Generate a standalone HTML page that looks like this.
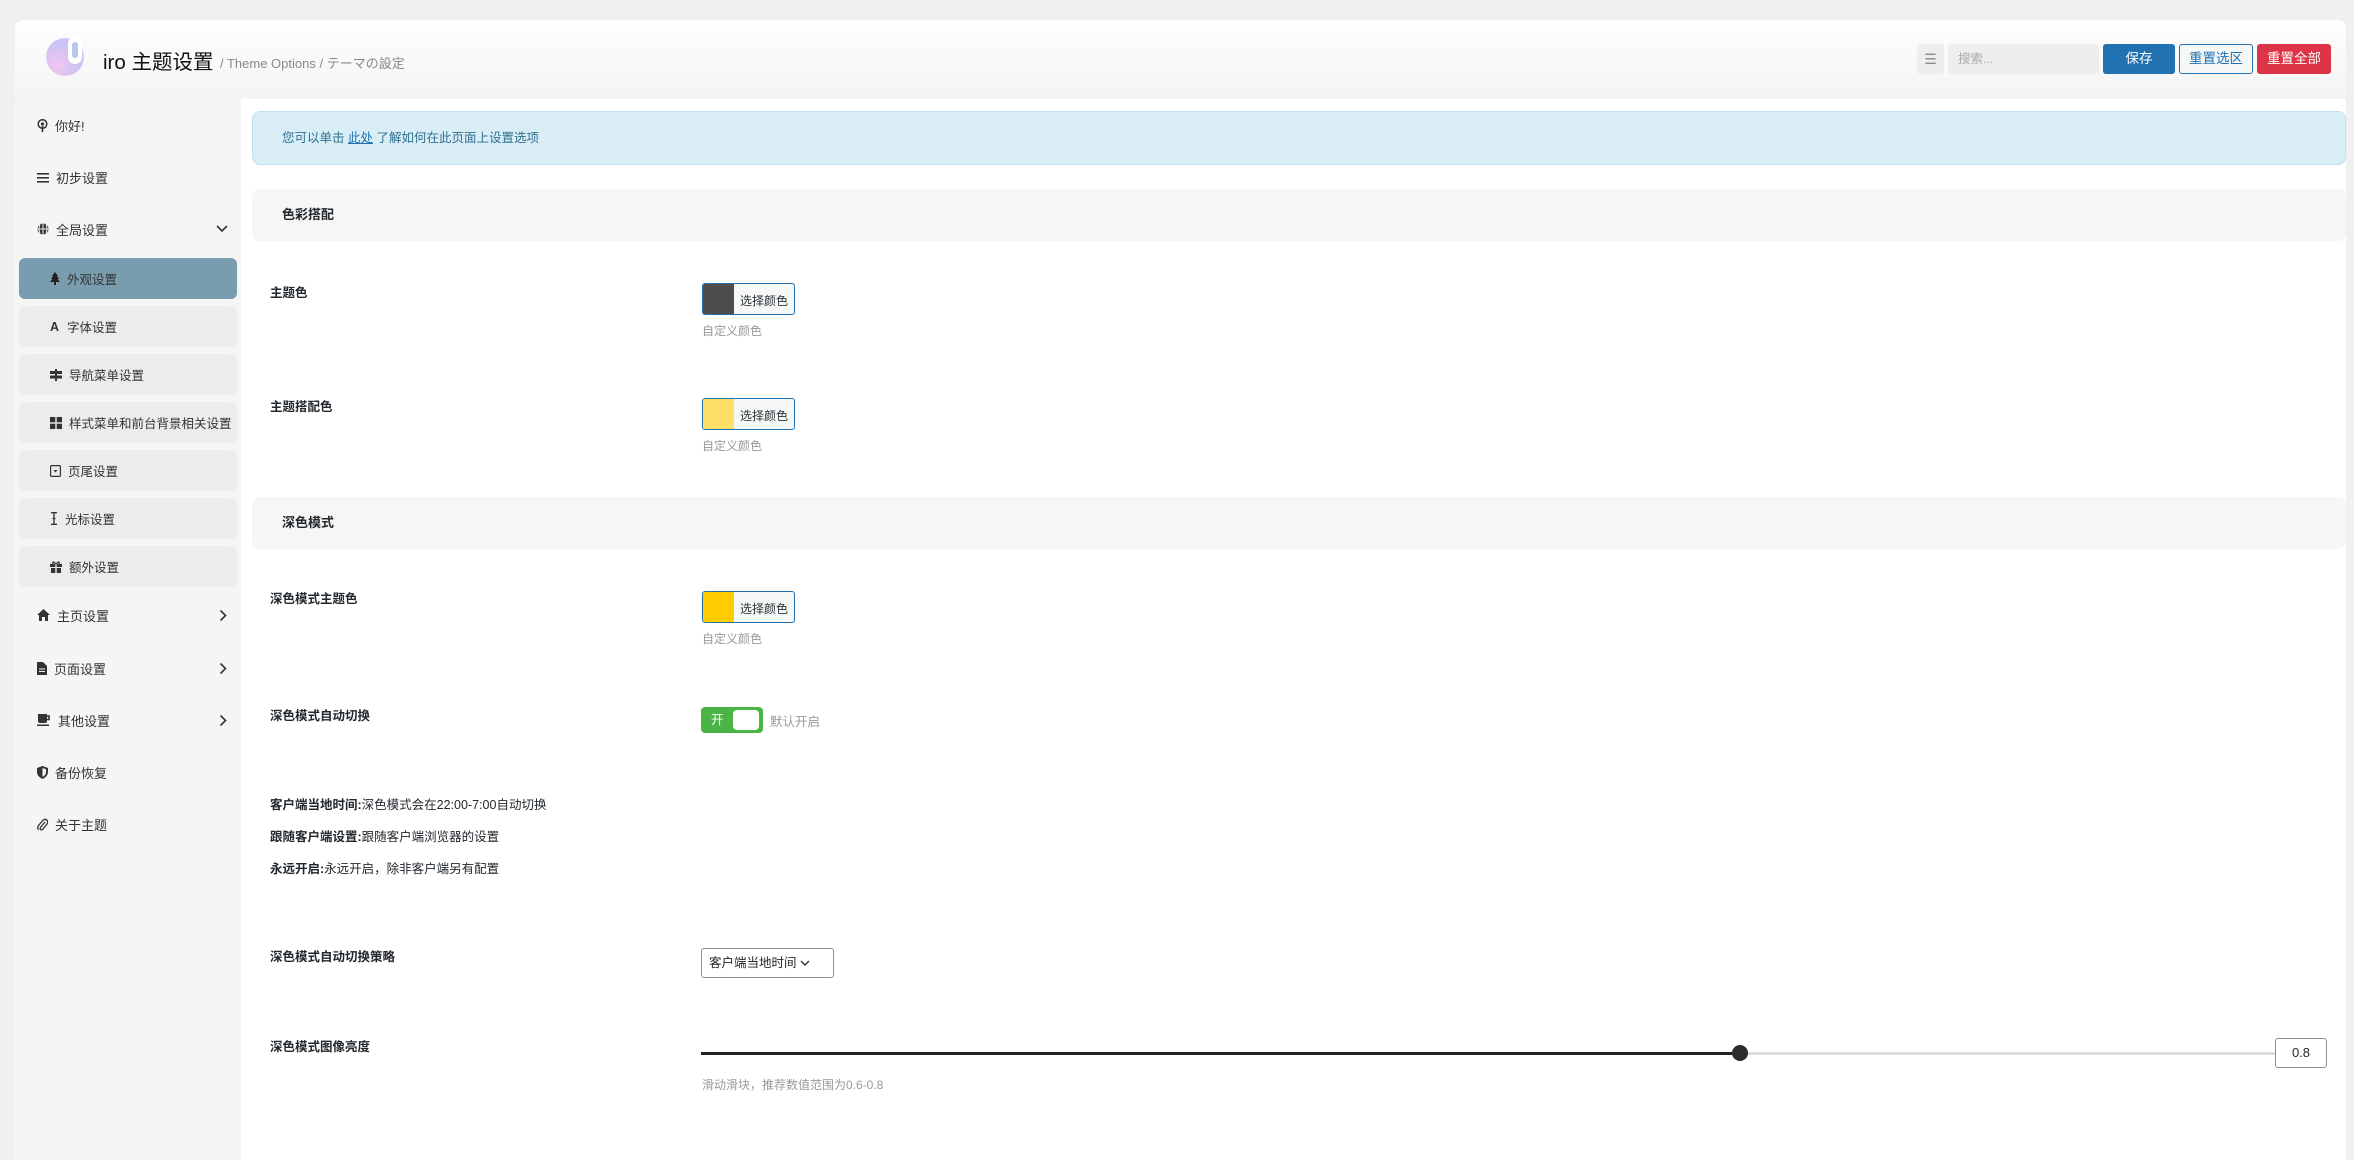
<!DOCTYPE html>
<html><head><meta charset="utf-8"><style>
*{box-sizing:border-box;margin:0;padding:0}
body{width:2354px;height:1147px;background:#f0f0f0;font-family:"Liberation Sans","Noto Sans CJK SC",sans-serif;font-size:13px;color:#23282d;position:relative;overflow:hidden}
.abs{position:absolute}
.card{position:absolute;left:15px;top:20px;width:2331px;height:1140px;background:#fff;border-radius:8px 8px 0 0;overflow:hidden}
.hdr{position:absolute;left:0;top:0;width:100%;height:79px;background:linear-gradient(#fefefe,#f4f4f4)}
.side{position:absolute;left:0;top:79px;width:226px;height:1100px;background:#f5f5f5}
.si{position:absolute;left:22px;font-size:13px;color:#333;display:flex;align-items:center;height:20px}
.si svg{margin-right:7px}
.sub{position:absolute;left:4px;width:218px;height:41px;background:#ececec;border-radius:6px;font-size:12.5px;color:#333;display:flex;align-items:center;padding-left:31px}
.sub svg{margin-right:7px}
.chev{position:absolute;left:201px}
.sec{position:absolute;left:237px;width:2094px;height:52px;background:#f6f6f6;border-radius:8px;font-weight:bold;font-size:13px;padding-left:30px;line-height:52px}
.lbl{position:absolute;left:255px;font-weight:bold;font-size:12.5px;color:#23282d}
.cp{position:absolute;left:687px;width:93px;height:32px;border:1px solid #2271b1;border-radius:3px;background:#f6f7f7;font-size:12px;color:#2c3338;overflow:hidden}
.cp i{position:absolute;left:0;top:0;width:31px;height:100%}
.cp span{position:absolute;left:37px;top:8px}
.desc{position:absolute;left:687px;font-size:12px;color:#999}
.btn{position:absolute;top:24px;height:30px;border-radius:3px;font-size:13.5px;text-align:center;line-height:30px}
</style></head><body>
<div class="card">
 <div class="hdr">
  <div class="abs" style="left:31px;top:18px;width:38px;height:38px;border-radius:50%;background:radial-gradient(circle at 30% 70%,#f1c6f0,#c9c2f4 60%,#ddd8fb)"></div>
  <div class="abs" style="left:53px;top:17px;width:14px;height:27px;border-radius:7px;background:#fff"></div>
  <div class="abs" style="left:57px;top:22px;width:6px;height:16px;border-radius:3px;background:#b7c6ef"></div>
  <div class="abs" style="left:88px;top:25px;font-size:20.5px;color:#111">iro 主题设置</div>
  <div class="abs" style="left:205px;top:33px;font-size:13px;color:#888">/ Theme Options / テーマの設定</div>
  <div class="abs" style="left:1902px;top:24px;width:27px;height:30px;background:#eee;border-radius:3px;color:#888;text-align:center;line-height:30px;font-size:14px">☰</div>
  <div class="abs" style="left:1933px;top:24px;width:151px;height:30px;background:#eee;border-radius:3px;color:#aaa;padding-left:10px;line-height:30px;font-size:12.5px">搜索...</div>
  <div class="btn" style="left:2088px;width:72px;background:#2271b1;color:#fff">保存</div>
  <div class="btn" style="left:2164px;width:74px;background:#f6f7f7;border:1px solid #2271b1;color:#2271b1;line-height:28px">重置选区</div>
  <div class="btn" style="left:2242px;width:74px;background:#dd3547;color:#fff">重置全部</div>
 </div>
 <div class="side">
  <div class="si" style="top:16px"><svg width="11" height="13" viewBox="0 0 11 13"><circle cx="5.5" cy="5" r="4.3" fill="none" stroke="#333" stroke-width="1.5"/><circle cx="5.5" cy="5" r="1.6" fill="#333"/><rect x="4.7" y="7" width="1.6" height="6" fill="#333"/></svg>你好!</div>
  <div class="si" style="top:68px"><svg width="12" height="11" viewBox="0 0 12 11"><rect y="1" width="12" height="1.6" fill="#333"/><rect y="5" width="12" height="1.6" fill="#333"/><rect y="9" width="12" height="1.6" fill="#333"/></svg>初步设置</div>
  <div class="si" style="top:120px"><svg width="12" height="12" viewBox="0 0 12 12"><circle cx="6" cy="6" r="5.5" fill="#333"/><path d="M0.5 6H11.5M6 .5V11.5M3 1.5Q1 6 3 10.5M9 1.5Q11 6 9 10.5" stroke="#f5f5f5" stroke-width="1" fill="none"/></svg>全局设置</div>
  <svg class="chev" style="top:126px" width="12" height="8" viewBox="0 0 12 8"><path d="M1 1L6 6L11 1" stroke="#333" stroke-width="1.6" fill="none"/></svg>
  <div class="sub" style="top:159px;background:#799cae"><svg width="10" height="13" viewBox="0 0 10 13"><path d="M5 0L8 4H7L9 7H7.5L10 10H6V13H4V10H0L2.5 7H1L3 4H2Z" fill="#222"/></svg>外观设置</div>
  <div class="sub" style="top:207px"><span style="font-weight:bold;margin-right:8px">A</span>字体设置</div>
  <div class="sub" style="top:255px"><svg width="12" height="12" viewBox="0 0 12 12"><rect x="5" y="0" width="2" height="12" fill="#333"/><rect x="0" y="2" width="12" height="3" fill="#333"/><rect x="0" y="6.5" width="12" height="3" fill="#333"/></svg>导航菜单设置</div>
  <div class="sub" style="top:303px"><svg width="12" height="12" viewBox="0 0 12 12"><rect width="5.3" height="5.3" fill="#333"/><rect x="6.7" width="5.3" height="5.3" fill="#333"/><rect y="6.7" width="5.3" height="5.3" fill="#333"/><rect x="6.7" y="6.7" width="5.3" height="5.3" fill="#333"/></svg>样式菜单和前台背景相关设置</div>
  <div class="sub" style="top:351px"><svg width="11" height="12" viewBox="0 0 11 12"><rect x=".6" y=".6" width="9.8" height="10.8" rx="1" fill="none" stroke="#333" stroke-width="1.2"/><path d="M3.5 5H7.5L5.5 7.5Z" fill="#333"/></svg>页尾设置</div>
  <div class="sub" style="top:399px"><svg width="8" height="13" viewBox="0 0 8 13"><path d="M1 .7H7M1 12.3H7M4 .7V12.3M2.5 6.5H5.5" stroke="#333" stroke-width="1.3"/></svg>光标设置</div>
  <div class="sub" style="top:447px"><svg width="12" height="12" viewBox="0 0 12 12"><rect y="3" width="12" height="3" fill="#333"/><rect x="1" y="7" width="10" height="5" fill="#333"/><rect x="5.3" y="3" width="1.4" height="9" fill="#ececec"/><path d="M6 3Q2 -1 3 3M6 3Q10 -1 9 3" stroke="#333" fill="none" stroke-width="1.3"/></svg>额外设置</div>
  <div class="si" style="top:506px"><svg width="13" height="12" viewBox="0 0 13 12"><path d="M6.5 0L13 6H11V12H8V8H5V12H2V6H0Z" fill="#333"/></svg>主页设置</div>
  <svg class="chev" style="top:510px;left:204px" width="8" height="13" viewBox="0 0 8 13"><path d="M1.5 1.5L6.5 6.5L1.5 11.5" stroke="#333" stroke-width="1.6" fill="none"/></svg>
  <div class="si" style="top:559px"><svg width="10" height="13" viewBox="0 0 10 13"><path d="M0 0H6L10 4V13H0Z" fill="#333"/><path d="M2 7H8M2 9.5H8" stroke="#f5f5f5"/></svg>页面设置</div>
  <svg class="chev" style="top:563px;left:204px" width="8" height="13" viewBox="0 0 8 13"><path d="M1.5 1.5L6.5 6.5L1.5 11.5" stroke="#333" stroke-width="1.6" fill="none"/></svg>
  <div class="si" style="top:611px"><svg width="14" height="12" viewBox="0 0 14 12"><path d="M1 0H10V7Q10 9 8 9H3Q1 9 1 7Z" fill="#333"/><path d="M10 2H12V5.5H10" stroke="#333" stroke-width="1.6" fill="none"/><rect y="10.5" width="12" height="1.5" fill="#333"/></svg>其他设置</div>
  <svg class="chev" style="top:615px;left:204px" width="8" height="13" viewBox="0 0 8 13"><path d="M1.5 1.5L6.5 6.5L1.5 11.5" stroke="#333" stroke-width="1.6" fill="none"/></svg>
  <div class="si" style="top:663px"><svg width="11" height="13" viewBox="0 0 11 13"><path d="M5.5 0L11 2V6Q11 10.5 5.5 13Q0 10.5 0 6V2Z" fill="#333"/><path d="M5.5 2L9 3.3V6Q9 9 5.5 11Z" fill="#f5f5f5"/></svg>备份恢复</div>
  <div class="si" style="top:715px"><svg width="11" height="13" viewBox="0 0 11 13"><path d="M8 4L3.5 9.5Q2.5 11 3.8 11.8Q5 12.3 6 11L10 6Q11.5 3.5 9.5 1.8Q7.5 .5 5.8 2.5L1.5 7.5Q0 10 1.5 11.8" stroke="#333" stroke-width="1.3" fill="none"/></svg>关于主题</div>
 </div>
 <div class="abs" style="left:237px;top:91px;width:2094px;height:54px;background:#d9edf6;border:1px solid #bfe1ee;border-radius:8px;padding-left:29px;line-height:52px;font-size:12.5px;color:#31708f">您可以单击 <span style="color:#2271b1;text-decoration:underline">此处</span> 了解如何在此页面上设置选项</div>
 <div class="sec" style="top:169px">色彩搭配</div>
 <div class="lbl" style="top:262px">主题色</div>
 <div class="cp" style="top:263px"><i style="background:#4d4d4d"></i><span>选择颜色</span></div>
 <div class="desc" style="top:302px">自定义颜色</div>
 <div class="lbl" style="top:376px">主题搭配色</div>
 <div class="cp" style="top:378px"><i style="background:#fedf68"></i><span>选择颜色</span></div>
 <div class="desc" style="top:417px">自定义颜色</div>
 <div class="sec" style="top:477px">深色模式</div>
 <div class="lbl" style="top:568px">深色模式主题色</div>
 <div class="cp" style="top:571px"><i style="background:#fecc00"></i><span>选择颜色</span></div>
 <div class="desc" style="top:610px">自定义颜色</div>
 <div class="lbl" style="top:685px">深色模式自动切换</div>
 <div class="abs" style="left:686px;top:687px;width:62px;height:26px;background:#4ab544;border-radius:4px;color:#fff;font-size:12.5px;line-height:26px;padding-left:10px">开<div class="abs" style="left:32px;top:3px;width:26px;height:20px;background:#fff;border-radius:4px"></div></div>
 <div class="abs" style="left:755px;top:691px;font-size:12.5px;color:#999">默认开启</div>
 <div class="abs" style="left:255px;top:769px;font-size:12.5px;line-height:32px"><b>客户端当地时间:</b>深色模式会在22:00-7:00自动切换<br><b>跟随客户端设置:</b>跟随客户端浏览器的设置<br><b>永远开启:</b>永远开启，除非客户端另有配置</div>
 <div class="lbl" style="top:926px">深色模式自动切换策略</div>
 <div class="abs" style="left:686px;top:928px;width:133px;height:30px;border:1px solid #8c8f94;border-radius:3px;font-size:12.5px;line-height:28px;padding-left:7px">客户端当地时间 <svg width="10" height="7" viewBox="0 0 10 7"><path d="M1 1L5 5L9 1" stroke="#333" stroke-width="1.4" fill="none"/></svg></div>
 <div class="lbl" style="top:1016px">深色模式图像亮度</div>
 <div class="abs" style="left:686px;top:1032px;width:1040px;height:3px;background:#222"></div>
 <div class="abs" style="left:1726px;top:1032px;width:535px;height:3px;background:#ddd"></div>
 <div class="abs" style="left:1717px;top:1025px;width:16px;height:16px;border-radius:50%;background:#2c2c2c"></div>
 <div class="abs" style="left:2260px;top:1018px;width:52px;height:30px;border:1px solid #8c8f94;border-radius:3px;font-size:13px;text-align:center;line-height:28px">0.8</div>
 <div class="desc" style="top:1056px">滑动滑块，推荐数值范围为0.6-0.8</div>
</div>
</body></html>
